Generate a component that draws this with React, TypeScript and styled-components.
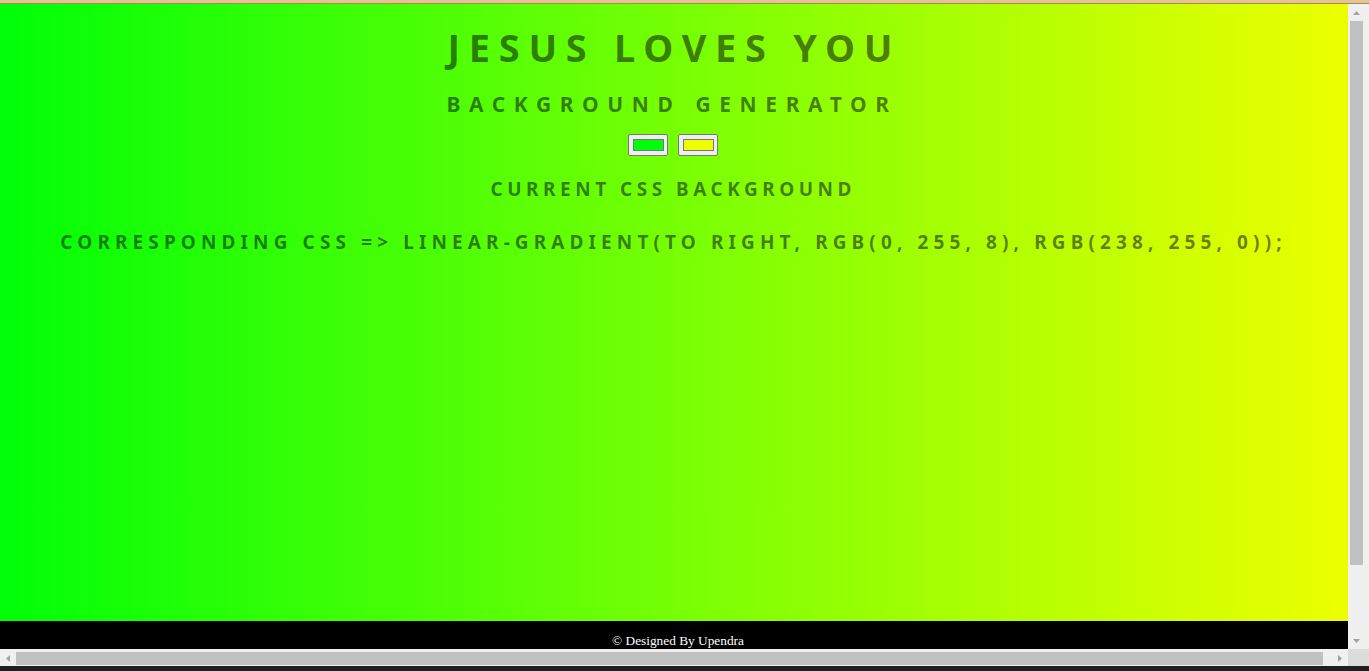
import React, { useState } from 'react';
import styled, { createGlobalStyle } from 'styled-components';

const GlobalStyle = createGlobalStyle`
  html, body { margin: 0; padding: 0; height: 100%; overflow: hidden; }
  body { background: #f0f0f0; }
  #root { height: 100%; }
`;

const Window = styled.div`
  display: flex;
  flex-direction: column;
  height: 100vh;
  width: 100vw;
`;

const TitleStrip = styled.div`
  flex: none;
  height: 3px;
  background: #e4c590;
  border-bottom: 1px solid #a58a60;
`;

const Middle = styled.div`
  display: flex;
  flex: 1;
  min-height: 0;
`;

const Viewport = styled.div`
  flex: 1;
  min-width: 0;
  overflow: hidden;
`;

const Page = styled.div`
  width: 1356px;
`;

const Main = styled.main<{ $from: string; $to: string }>`
  height: 617px;
  box-sizing: border-box;
  padding: 24px 12px 0 0;
  background: linear-gradient(to right, ${(p) => p.$from}, ${(p) => p.$to});
  display: flex;
  flex-direction: column;
  align-items: center;
  font-family: "Comic Sans MS", "Noto Sans", sans-serif;
  font-weight: 700;
  color: rgba(0, 0, 0, 0.5);
  text-transform: uppercase;
  text-align: center;
`;

const Title = styled.h1`
  margin: 0;
  font-size: 38px;
  line-height: 38px;
  font-weight: 700;
  letter-spacing: 8.7px;
  padding-left: 4.7px;
`;

const Subtitle = styled.h2`
  margin: 28px 0 0;
  font-size: 21px;
  line-height: 21px;
  font-weight: 700;
  letter-spacing: 8.6px;
  padding-left: 0;
`;

const Pickers = styled.div`
  display: flex;
  gap: 10px;
  margin-top: 19px;
  padding-left: 2px;
`;

const ColorInput = styled.input`
  width: 40px;
  height: 22px;
  box-sizing: border-box;
  margin: 0;
  padding: 0;
  border: 1px solid #767676;
  border-radius: 2px;
  background: #efefef;
  cursor: pointer;

  &::-webkit-color-swatch-wrapper {
    padding: 4px 3px 4px 4px;
  }
  &::-webkit-color-swatch {
    border: 1px solid #777777;
    border-radius: 0;
  }
`;

const Heading3 = styled.h3<{ $gap: number; $ls: number }>`
  margin: ${(p) => p.$gap}px 0 0;
  font-size: 19px;
  line-height: 19px;
  font-weight: 700;
  letter-spacing: ${(p) => p.$ls}px;
  padding-left: ${(p) => p.$ls - 2}px;
  white-space: nowrap;
`;

const Footer = styled.footer`
  height: 110px;
  box-sizing: border-box;
  padding-top: 12px;
  background: #000;
  color: #fff;
  text-align: center;
  font-family: "Liberation Serif", "Times New Roman", serif;
  font-size: 13.33px;
  line-height: 1.15;
`;

const VBar = styled.div`
  flex: none;
  width: 21px;
  box-sizing: border-box;
  padding: 0 6px 0 2px;
  background: #f0f0f0;
  display: flex;
  flex-direction: column;
`;

const VButton = styled.div`
  flex: none;
  height: 17px;
  display: flex;
  align-items: center;
  justify-content: center;
`;

const VTrack = styled.div`
  flex: 1;
  display: flex;
  flex-direction: column;
`;

const VThumb = styled.div`
  flex: 0 0 89%;
  background: #c0c0c0;
`;

const HRow = styled.div`
  flex: none;
  height: 17px;
  display: flex;
`;

const HBar = styled.div`
  flex: 1;
  display: flex;
  box-sizing: border-box;
  padding: 3px 0 1px;
  background: #f0f0f0;
`;

const HButton = styled.div`
  flex: none;
  width: 16px;
  display: flex;
  align-items: center;
  justify-content: center;
`;

const HTrack = styled.div`
  flex: 1;
  display: flex;
`;

const HThumb = styled.div`
  flex: 0 0 99.3%;
  background: #c0c0c0;
`;

const Corner = styled.div`
  flex: none;
  width: 21px;
  background: #dcdcdc;
`;

const Taskbar = styled.div`
  flex: none;
  height: 5px;
  background: #1f1f1f;
`;

type Dir = 'up' | 'down' | 'left' | 'right';

const Arrow = ({ dir }: { dir: Dir }) => {
  const vertical = dir === 'up' || dir === 'down';
  const w = vertical ? 7 : 4;
  const h = vertical ? 4 : 7;
  const pts =
    dir === 'up'
      ? '3.5,0 7,4 0,4'
      : dir === 'down'
      ? '0,0 7,0 3.5,4'
      : dir === 'left'
      ? '4,0 4,7 0,3.5'
      : '0,0 4,3.5 0,7';
  return (
    <svg width={w} height={h} viewBox={`0 0 ${w} ${h}`}>
      <polygon points={pts} fill="#a3a3a3" />
    </svg>
  );
};

const hexToRgb = (hex: string) => {
  const n = parseInt(hex.slice(1), 16);
  return `rgb(${(n >> 16) & 255}, ${(n >> 8) & 255}, ${n & 255})`;
};

export default function App() {
  const [c1, setC1] = useState('#00ff08');
  const [c2, setC2] = useState('#eeff00');
  const css = `linear-gradient(to right, ${hexToRgb(c1)}, ${hexToRgb(c2)});`;

  return (
    <>
      <GlobalStyle />
      <Window>
        <TitleStrip />
        <Middle>
          <Viewport>
            <Page>
              <Main $from={c1} $to={c2}>
                <Title>Jesus Loves You</Title>
                <Subtitle>Background Generator</Subtitle>
                <Pickers>
                  <ColorInput type="color" value={c1} onChange={(e) => setC1(e.target.value)} />
                  <ColorInput type="color" value={c2} onChange={(e) => setC2(e.target.value)} />
                </Pickers>
                <Heading3 $gap={24} $ls={4.5}>
                  Current CSS Background
                </Heading3>
                <Heading3 $gap={34} $ls={5.12}>
                  Corresponding CSS =&gt; {css}
                </Heading3>
              </Main>
              <Footer>© Designed By Upendra</Footer>
            </Page>
          </Viewport>
          <VBar>
            <VButton>
              <Arrow dir="up" />
            </VButton>
            <VTrack>
              <VThumb />
            </VTrack>
            <VButton>
              <Arrow dir="down" />
            </VButton>
          </VBar>
        </Middle>
        <HRow>
          <HBar>
            <HButton>
              <Arrow dir="left" />
            </HButton>
            <HTrack>
              <HThumb />
            </HTrack>
            <HButton>
              <Arrow dir="right" />
            </HButton>
          </HBar>
          <Corner />
        </HRow>
        <Taskbar />
      </Window>
    </>
  );
}
